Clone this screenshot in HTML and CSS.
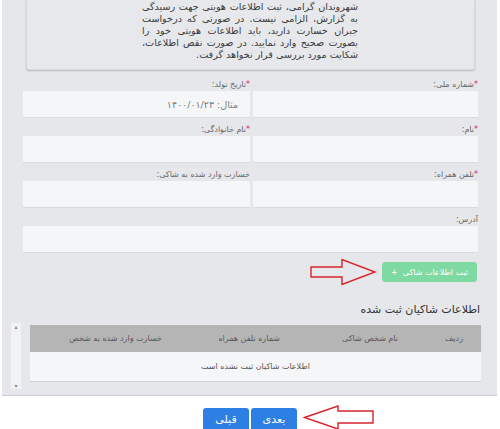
FILE: index.html
```
<!DOCTYPE html>
<html lang="fa" dir="rtl">
<head>
    <meta charset="UTF-8">
    <meta name="viewport" content="width=device-width, initial-scale=1.0">
    <title>ثبت اطلاعات شاکی</title>
    <link rel="stylesheet" href="styles.css">
</head>
<body>

<div class="panel">
    <div class="notice">
        <div class="notice-text">
            <span>شهروندان گرامی، ثبت اطلاعات هویتی جهت رسیدگی</span>
            <span>به گزارش، الزامی نیست. در صورتی که درخواست</span>
            <span>جبران خسارت دارید، باید اطلاعات هویتی خود را</span>
            <span>بصورت صحیح وارد نمایید. در صورت نقص اطلاعات،</span>
            <span class="last">شکایت مورد بررسی قرار نخواهد گرفت.</span>
        </div>
    </div>

    <div class="form-grid">
        <div class="field">
            <label><span class="req">*</span>شماره ملی:</label>
            <input type="text">
        </div>
        <div class="field">
            <label><span class="req">*</span>تاریخ تولد:</label>
            <input type="text" placeholder="مثال: ۱۴۰۰/۰۱/۲۳">
        </div>
        <div class="field">
            <label><span class="req">*</span>نام:</label>
            <input type="text">
        </div>
        <div class="field">
            <label><span class="req">*</span>نام خانوادگی:</label>
            <input type="text">
        </div>
        <div class="field">
            <label><span class="req">*</span>تلفن همراه:</label>
            <input type="text">
        </div>
        <div class="field">
            <label>خسارت وارد شده به شاکی:</label>
            <input type="text">
        </div>
        <div class="field wide">
            <label>آدرس:</label>
            <input type="text">
        </div>
    </div>

    <div class="actions">
        <button class="btn-add">ثبت اطلاعات شاکی&nbsp; +</button>
        <svg class="arrow arrow-add" width="67" height="28" viewBox="0 0 67 28">
            <path d="M1,9 H32 V1.5 L65,14 L32,26.5 V19 H1 Z" fill="none" stroke="#d8232d" stroke-width="1.4"/>
        </svg>
    </div>

    <h3 class="list-title">اطلاعات شاکیان ثبت شده</h3>

    <div class="table-wrap">
        <table class="list-table">
            <thead>
                <tr>
                    <th class="col-row">ردیف</th>
                    <th class="col-name">نام شخص شاکی</th>
                    <th class="col-phone">شماره تلفن همراه</th>
                    <th class="col-loss">خسارت وارد شده به شخص</th>
                </tr>
            </thead>
            <tbody>
                <tr>
                    <td colspan="4" class="empty">اطلاعات شاکیان ثبت نشده است</td>
                </tr>
            </tbody>
        </table>
        <div class="scrollbar">
            <span class="scroll-up">&#9652;</span>
            <span class="scroll-down">&#9662;</span>
        </div>
    </div>
</div>

<div class="nav">
    <button class="btn-nav">بعدی</button>
    <button class="btn-nav">قبلی</button>
    <svg class="arrow arrow-next" width="71" height="25" viewBox="0 0 71 25">
        <path d="M1.5,12.5 L35,1 V6 H70 V18 H35 V24 Z" fill="none" stroke="#d8232d" stroke-width="1.4"/>
    </svg>
</div>

</body>
</html>
```

FILE: styles.css
```
body {
    font-family: 'DejaVu Sans', sans-serif;
    margin: 0;
    padding: 0;
    background-color: #fff;
    color: #333;
}
.panel {
    margin: 0 3px 0 2px;
    padding: 0 19px 6px 21px;
    background-color: #e5e7eb;
    border-bottom: 1px solid #c9ccd1;
}
.notice {
    box-sizing: border-box;
    height: 70px;
    margin: 0 3px 0 3px;
    padding: 1px 116px 0 0;
    background-color: #e6e8ec;
    border: 1px solid #d6d8dc;
    border-top: none;
    border-radius: 0 0 3px 3px;
    box-shadow: 0 1px 2px rgba(0,0,0,0.2);
}
.notice-text {
    width: 216px;
    font-size: 9.6px;
    line-height: 12px;
    color: #3a3a3a;
}
.notice-text span {
    display: block;
    white-space: nowrap;
    text-align: justify;
    text-align-last: justify;
}
.notice-text span.last {
    text-align-last: right;
}
.form-grid {
    display: grid;
    grid-template-columns: 225px 227px;
    column-gap: 3px;
    margin-top: 10px;
}
.field {
    display: flex;
    flex-direction: column;
    margin-bottom: 7px;
}
.field.wide {
    grid-column: 1 / span 2;
}
.field label {
    height: 10px;
    margin-bottom: 1px;
    font-size: 8px;
    line-height: 10px;
    color: #666;
}
.req {
    color: #e0245e;
}
.field input {
    box-sizing: border-box;
    height: 27px;
    padding: 0 12px;
    background-color: #f5f6f8;
    border: none;
    border-bottom: 1px solid #d8dbe0;
    font-family: inherit;
    font-size: 9.5px;
    color: #555;
    outline: none;
}
.field input::placeholder {
    color: #7d7d7d;
}
.actions {
    position: relative;
    display: flex;
    margin-top: 2px;
    margin-right: 1px;
}
.btn-add {
    height: 20px;
    width: 95px;
    padding: 0;
    background-color: #7fd9a2;
    color: #fff;
    border: none;
    border-radius: 3px;
    font-family: inherit;
    font-size: 8px;
}
.arrow {
    position: absolute;
}
.arrow-add {
    right: 100px;
    top: -4px;
}
.list-title {
    margin: 20px -2px 5px 0;
    height: 16px;
    font-size: 11px;
    line-height: 16px;
    font-weight: normal;
    color: #333;
}
.table-wrap {
    display: flex;
    gap: 9px;
    height: 66px;
    margin: 0 -3px 0 -12px;
}
.list-table {
    flex: 1;
    align-self: flex-start;
    margin-top: 2px;
    border-collapse: collapse;
    font-size: 8px;
}
.list-table th {
    height: 27px;
    padding: 0;
    background-color: #b5b5b5;
    color: #555;
    font-weight: normal;
    text-align: right;
}
.col-row { width: 47px; padding-right: 18px !important; }
.col-name { width: 100px; padding-right: 18px !important; }
.col-phone { width: 100px; padding-right: 18px !important; }
.col-loss { padding-right: 18px !important; }
.list-table td.empty {
    height: 27px;
    background-color: #f5f6f8;
    border-bottom: 1px solid #cfd2d6;
    text-align: center;
    color: #555;
}
.scrollbar {
    width: 10px;
    display: flex;
    flex-direction: column;
    justify-content: space-between;
    align-items: center;
    background-color: #f1f2f4;
    font-size: 6px;
    color: #888;
}
.nav {
    position: relative;
    display: flex;
    justify-content: center;
    gap: 2px;
    padding-top: 12px;
}
.btn-nav {
    height: 26px;
    width: 46px;
    padding: 0 0 4px;
    background-color: #2e7fe3;
    color: #fff;
    border: none;
    border-radius: 3px 3px 0 0;
    font-family: inherit;
    font-size: 11px;
}
.arrow-next {
    left: 303px;
    top: 9px;
}
```
